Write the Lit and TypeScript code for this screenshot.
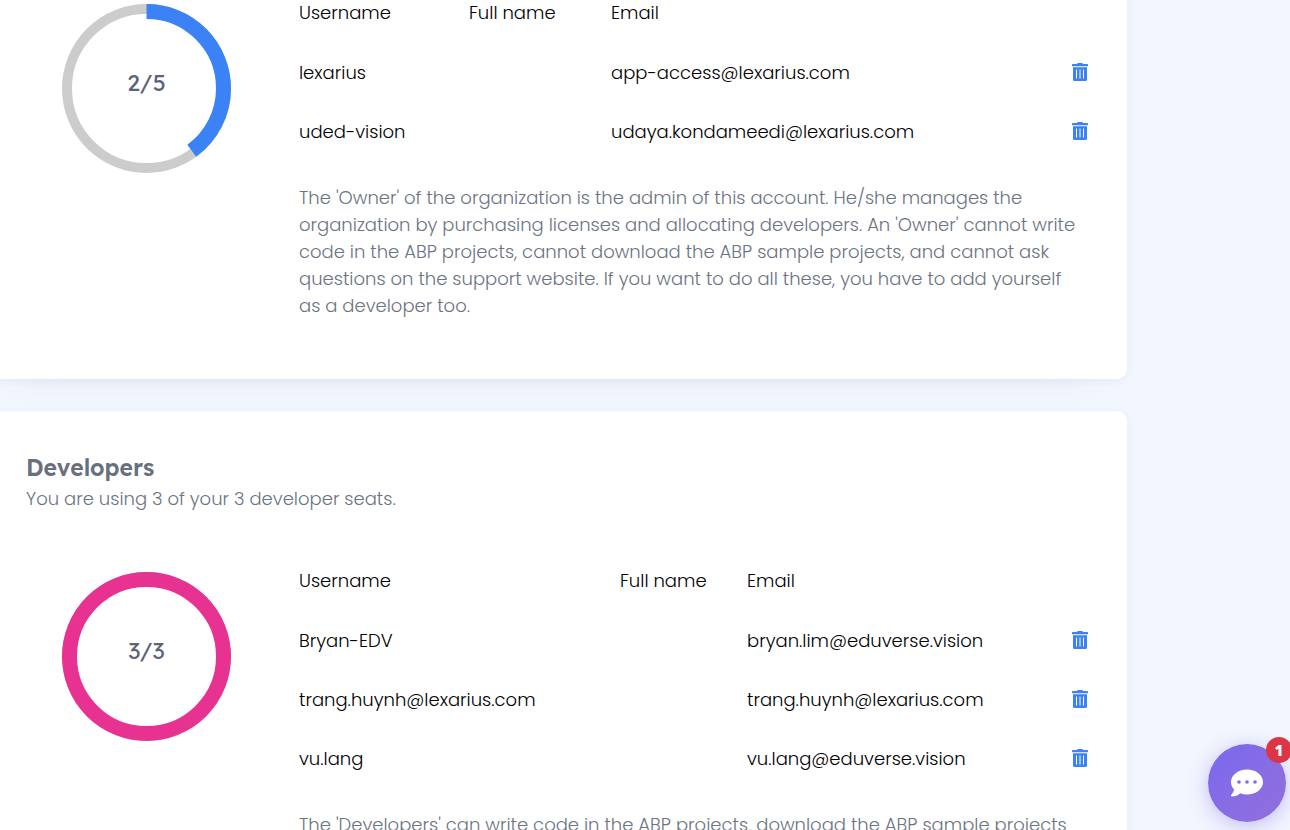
import { LitElement, html, css, svg, nothing } from "lit";
import { customElement, property } from "lit/decorators.js";

interface Member {
  username: string;
  fullName: string;
  email: string;
}

@customElement("seat-ring")
class SeatRing extends LitElement {
  @property({ type: Number }) used = 0;
  @property({ type: Number }) total = 1;
  @property() color = "#3b82f6";

  static styles = css`
    :host {
      display: grid;
      width: 169px;
      height: 169px;
    }
    .ring,
    .count {
      grid-area: 1 / 1;
    }
    .ring {
      display: block;
      width: 100%;
      height: 100%;
    }
    .count {
      place-self: center;
      padding-bottom: 12px;
      font: 400 23px/28px "Lexend", "Lexend Deca", "Outfit", "Lato", sans-serif;
      color: #5a6478;
    }
  `;

  render() {
    const share = (this.used / this.total) * 100;
    return html`
      <svg class="ring" viewBox="0 0 169 169" aria-hidden="true">
        <circle cx="84.5" cy="84.5" r="79.5" fill="none" stroke="#cccccc" stroke-width="10" />
        ${svg`<circle cx="84.5" cy="84.5" r="77" fill="none" stroke=${this.color} stroke-width="15"
          pathLength="100" stroke-dasharray="${share} ${100 - share}" transform="rotate(-90 84.5 84.5)" />`}
      </svg>
      <span class="count">${this.used}/${this.total}</span>
    `;
  }
}

@customElement("member-table")
class MemberTable extends LitElement {
  @property({ attribute: false }) members: Member[] = [];
  @property({ attribute: false }) columns: number[] = [];

  static styles = css`
    table {
      width: 100%;
      border-collapse: collapse;
      table-layout: fixed;
    }
    th,
    td {
      padding: 16px;
      font-weight: 300;
      text-align: left;
      line-height: 27px;
      white-space: nowrap;
      color: #000;
    }
    th {
      line-height: 28px;
    }
    tr > :last-child {
      padding: 0 15px 0 0;
      text-align: right;
    }
    .remove {
      display: inline-block;
      padding: 0;
      border: 0;
      background: none;
      vertical-align: middle;
      cursor: pointer;
    }
    .remove svg {
      display: block;
      width: 16px;
      height: 22px;
    }
  `;

  render() {
    return html`
      <table>
        <colgroup>
          ${this.columns.map((w) => html`<col style="width:${w}px" />`)}
          <col />
          <col style="width:48px" />
        </colgroup>
        <thead>
          <tr>
            <th>Username</th>
            <th>Full name</th>
            <th>Email</th>
            <th></th>
          </tr>
        </thead>
        <tbody>
          ${this.members.map(
            (m) => html`<tr>
              <td>${m.username}</td>
              <td>${m.fullName}</td>
              <td>${m.email}</td>
              <td>
                <button class="remove" aria-label="Remove ${m.username}">
                  <svg viewBox="0 0 16 22" aria-hidden="true">
                    <path fill="#3b82f6" d="M5 1 5.600 0h4.800L11 1h4.200a.8.8 0 0 1 .8.8V3.200H0V1.800A.8.8 0 0 1 .8 1z" />
                    <path fill="#3b82f6" d="M1 4.200h14v12.200a1.600 1.600 0 0 1-1.600 1.600H2.600A1.600 1.600 0 0 1 1 16.400z" />
                    <path stroke="#fff" stroke-width="1" d="M4.500 6.500v9M8 6.500v9M11.500 6.500v9" />
                  </svg>
                </button>
              </td>
            </tr>`
          )}
        </tbody>
      </table>
    `;
  }
}

@customElement("seat-card")
class SeatCard extends LitElement {
  @property() heading = "";
  @property() summary = "";
  @property() note = "";
  @property() color = "";
  @property({ type: Number }) total = 0;
  @property({ attribute: false }) members: Member[] = [];
  @property({ attribute: false }) columns: number[] = [];

  static styles = css`
    :host {
      display: block;
      padding: 0 24px 60px 48px;
      border-radius: 10px;
      background: #fff;
      box-shadow: 0 2px 8px rgba(40, 60, 100, 0.06), 0 30px 40px -40px rgba(40, 60, 100, 0.1);
    }
    .head {
      padding: 42px 0 36px;
    }
    .title {
      margin: 0;
      font: 600 23px/30px "Lexend", "Lexend Deca", "Outfit", "Lato", sans-serif;
      color: #68707e;
    }
    .summary,
    .note {
      margin: 0;
      color: #6c7482;
    }
    .summary {
      line-height: 32px;
    }
    .body {
      display: grid;
      grid-template-columns: 169px minmax(0, 1fr);
      gap: 52px;
      padding-left: 36px;
    }
    .ring {
      margin-top: 21px;
    }
    .note {
      padding: 23px 16px 0;
      line-height: 27px;
    }
  `;

  render() {
    return html`
      ${this.heading
        ? html`<header class="head">
            <h2 class="title">${this.heading}</h2>
            <p class="summary">${this.summary}</p>
          </header>`
        : nothing}
      <div class="body">
        <seat-ring class="ring" .used=${this.members.length} .total=${this.total} .color=${this.color}></seat-ring>
        <div>
          <member-table .members=${this.members} .columns=${this.columns}></member-table>
          <p class="note">${this.note}</p>
        </div>
      </div>
    `;
  }
}

@customElement("app-root")
class AppRoot extends LitElement {
  owners: Member[] = [
    { username: "lexarius", fullName: "", email: "app-access@lexarius.com" },
    { username: "uded-vision", fullName: "", email: "udaya.kondameedi@lexarius.com" },
  ];
  developers: Member[] = [
    { username: "Bryan-EDV", fullName: "", email: "bryan.lim@eduverse.vision" },
    { username: "trang.huynh@lexarius.com", fullName: "", email: "trang.huynh@lexarius.com" },
    { username: "vu.lang", fullName: "", email: "vu.lang@eduverse.vision" },
  ];

  static styles = css`
    :host {
      display: block;
      height: 100vh;
      overflow: hidden;
      background: #f2f6fe;
      font: 300 18px/27px "Poppins", "Inter", sans-serif;
    }
    .cards {
      display: grid;
      gap: 32px;
      margin: -17px 163px 0 -22px;
    }
    .chat {
      position: fixed;
      right: 4px;
      bottom: 8px;
      display: grid;
      place-items: center;
      width: 78px;
      height: 78px;
      padding: 0;
      border: 0;
      border-radius: 50%;
      background: linear-gradient(135deg, #7b68ee, #9370db);
      box-shadow: 0 4px 20px rgba(123, 104, 238, 0.4);
      cursor: pointer;
    }
    .bubble {
      width: 32px;
      height: 28px;
    }
    .badge {
      position: absolute;
      top: -7px;
      right: -6px;
      width: 26px;
      border-radius: 50%;
      background: #dc3545;
      color: #fff;
      font: 800 15px/26px "Open Sans", "Noto Sans", sans-serif;
      text-align: center;
    }
  `;

  render() {
    return html`
      <main class="cards">
        <seat-card
          color="#3b82f6"
          .total=${5}
          .members=${this.owners}
          .columns=${[170, 142]}
          note="The 'Owner' of the organization is the admin of this account. He/she manages the organization by purchasing licenses and allocating developers. An 'Owner' cannot write code in the ABP projects, cannot download the ABP sample projects, and cannot ask questions on the support website. If you want to do all these, you have to add yourself as a developer too."
        ></seat-card>
        <seat-card
          heading="Developers"
          summary="You are using 3 of your 3 developer seats."
          color="#e83291"
          .total=${3}
          .members=${this.developers}
          .columns=${[321, 127]}
          note="The 'Developers' can write code in the ABP projects, download the ABP sample projects"
        ></seat-card>
      </main>
      <button class="chat" aria-label="Open chat, 1 unread message">
        <svg class="bubble" viewBox="0 0 32 28" aria-hidden="true">
          <path
            fill="#fff"
            d="M16 .500C24.800.500 32 6 32 13s-7.200 12.500-16 12.500c-2.500 0-4.800-.400-6.800-1.200C7 26.500 4 27.500.800 27.500c-.900 0-1.200-.900-.700-1.500C1.800 24.200 2.800 22.500 3 20.500 1.100 18.400 0 15.800 0 13 0 6 7.200.500 16 .500z"
          />
          <g fill="#7f6ae8">
            <circle cx="8" cy="13" r="1.800" />
            <circle cx="16" cy="13" r="1.800" />
            <circle cx="24" cy="13" r="1.800" />
          </g>
        </svg>
        <span class="badge">1</span>
      </button>
    `;
  }
}
